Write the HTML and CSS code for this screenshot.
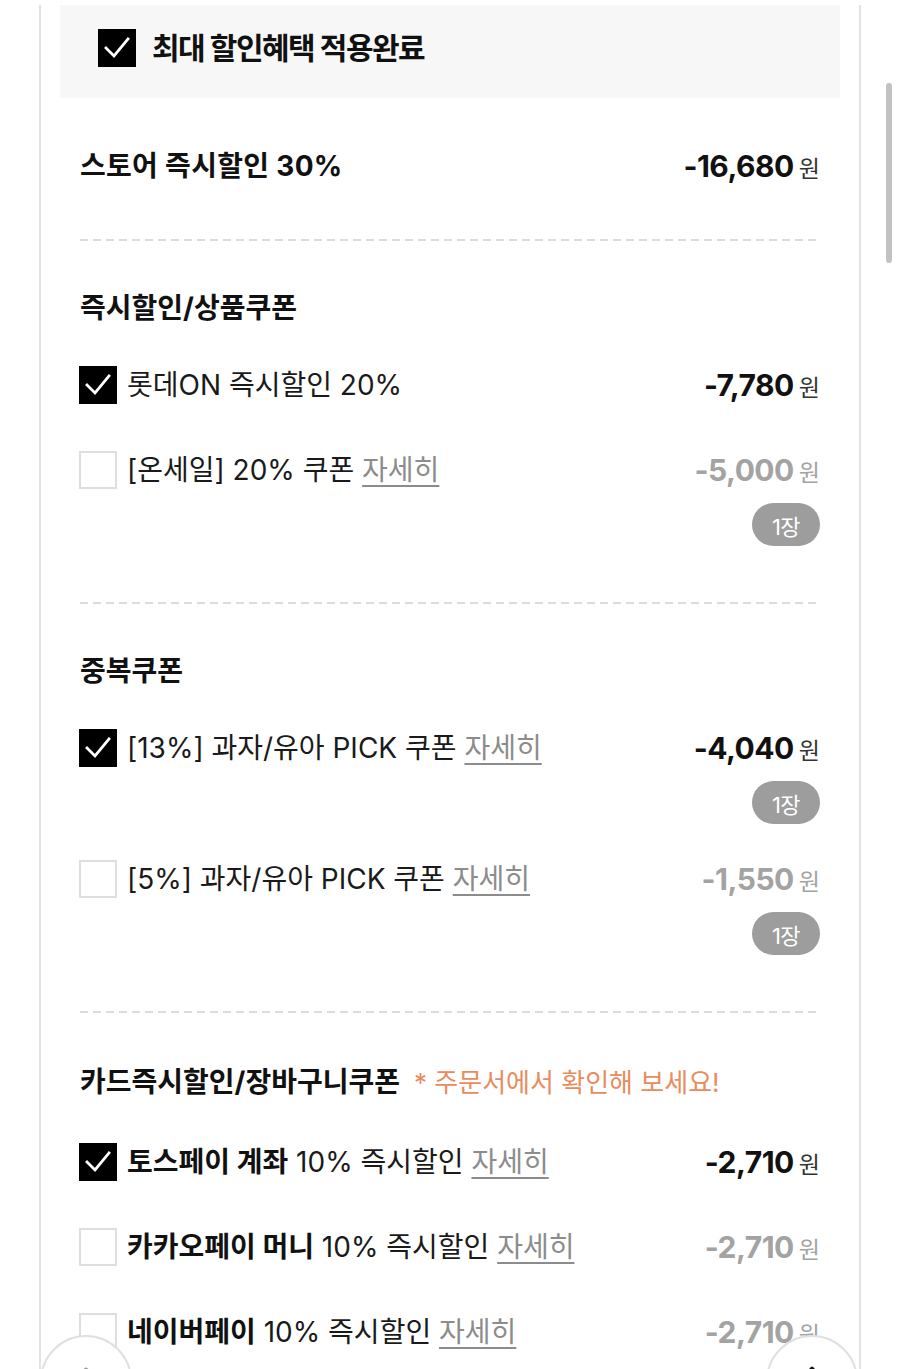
FILE: index.html
```html
<!DOCTYPE html>
<html lang="ko">
<head>
<meta charset="utf-8">
<title>할인혜택</title>
<link rel="stylesheet" href="styles.css">
</head>
<body>
<div class="page">
  <div class="sheet">
    <div class="banner">
      <span class="check is-on"><svg viewBox="0 0 38 38"><path d="M8 19 L16 27 L30 10"/></svg></span>
      <span class="banner-title">최대 할인혜택 적용완료</span>
    </div>

    <div class="section section--store">
      <div class="row">
        <span class="row-title">스토어 즉시할인 30%</span>
        <span class="price"><b>-16,680</b><span class="won">원</span></span>
      </div>
    </div>

    <div class="divider"></div>

    <section class="section">
      <h3 class="heading">즉시할인/상품쿠폰</h3>
      <ul class="items">
        <li class="item">
          <div class="opt"><span class="check is-on"><svg viewBox="0 0 38 38"><path d="M8 19 L16 27 L30 10"/></svg></span><span class="label">롯데ON 즉시할인 20%</span></div>
          <div class="amount"><span class="price"><b>-7,780</b><span class="won">원</span></span></div>
        </li>
        <li class="item">
          <div class="opt"><span class="check"></span><span class="label">[온세일] 20% 쿠폰 <a class="more">자세히</a></span></div>
          <div class="amount"><span class="price is-off"><b>-5,000</b><span class="won">원</span></span><span class="count">1장</span></div>
        </li>
      </ul>
    </section>

    <div class="divider"></div>

    <section class="section">
      <h3 class="heading">중복쿠폰</h3>
      <ul class="items">
        <li class="item">
          <div class="opt"><span class="check is-on"><svg viewBox="0 0 38 38"><path d="M8 19 L16 27 L30 10"/></svg></span><span class="label">[13%] 과자/유아 PICK 쿠폰 <a class="more">자세히</a></span></div>
          <div class="amount"><span class="price"><b>-4,040</b><span class="won">원</span></span><span class="count">1장</span></div>
        </li>
        <li class="item">
          <div class="opt"><span class="check"></span><span class="label">[5%] 과자/유아 PICK 쿠폰 <a class="more">자세히</a></span></div>
          <div class="amount"><span class="price is-off"><b>-1,550</b><span class="won">원</span></span><span class="count">1장</span></div>
        </li>
      </ul>
    </section>

    <div class="divider"></div>

    <section class="section">
      <h3 class="heading heading--note">카드즉시할인/장바구니쿠폰<span class="note">* 주문서에서 확인해 보세요!</span></h3>
      <ul class="items">
        <li class="item">
          <div class="opt"><span class="check is-on"><svg viewBox="0 0 38 38"><path d="M8 19 L16 27 L30 10"/></svg></span><span class="label"><strong>토스페이 계좌</strong> 10% 즉시할인 <a class="more">자세히</a></span></div>
          <div class="amount"><span class="price"><b>-2,710</b><span class="won">원</span></span></div>
        </li>
        <li class="item">
          <div class="opt"><span class="check"></span><span class="label"><strong>카카오페이 머니</strong> 10% 즉시할인 <a class="more">자세히</a></span></div>
          <div class="amount"><span class="price is-off"><b>-2,710</b><span class="won">원</span></span></div>
        </li>
        <li class="item">
          <div class="opt"><span class="check"></span><span class="label"><strong>네이버페이</strong> 10% 즉시할인 <a class="more">자세히</a></span></div>
          <div class="amount"><span class="price is-off"><b>-2,710</b><span class="won">원</span></span></div>
        </li>
      </ul>
    </section>
  </div>

  <div class="scroll-thumb"></div>

  <button class="fab fab--home" type="button" aria-label="홈">
    <svg viewBox="0 0 40 40"><path d="M6 20 L20 8 L34 20 M10 17 V33 H30 V17"/></svg>
  </button>
  <button class="fab fab--top" type="button" aria-label="맨 위로">
    <svg viewBox="0 0 40 40"><path d="M20 34 V8 M10 18 L20 7 L30 18"/></svg>
  </button>
</div>
</body>
</html>
```

FILE: styles.css
```css
* { box-sizing: border-box; }

body {
  margin: 0;
  background: #fff;
  color: #111;
  font-family: Inter, "Noto Sans CJK KR", sans-serif;
}

.page {
  position: relative;
  height: 1369px;
  overflow: hidden;
}

/* bottom sheet with thin side rules */
.sheet {
  width: 822px;
  min-height: 1400px;
  margin: 5px 0 0 39px;
  padding: 0 19px;
  border-left: 2px solid #e3e3e3;
  border-right: 2px solid #e3e3e3;
}

.banner {
  display: flex;
  align-items: center;
  gap: 16px;
  height: 93px;
  padding: 0 38px 7px;
  background: #f7f7f7;
}

.banner-title {
  font-size: 30px;
  font-weight: 700;
  letter-spacing: -1.5px;
  line-height: 38px;
}

/* checkboxes */
.check {
  flex: none;
  display: block;
  width: 38px;
  height: 38px;
  border: 2px solid #dedede;
  background: #fff;
}

.check.is-on {
  border: 0;
  background: #000;
}

.check svg {
  display: block;
  width: 38px;
  height: 38px;
}

.check path {
  fill: none;
  stroke: #fff;
  stroke-width: 2.8;
  stroke-linecap: square;
}

/* sections */
.section {
  padding: 47px 20px 56px;
}

.section--store {
  padding: 48px 20px 53px;
}

.row {
  display: flex;
  justify-content: space-between;
  align-items: center;
  height: 40px;
}

.row-title,
.heading {
  margin: 0;
  font-size: 28px;
  font-weight: 700;
  letter-spacing: 0;
  line-height: 40px;
}

.row-title {
  letter-spacing: 0.3px;
}

.heading--note {
  line-height: 44px;
}

.note {
  margin-left: 14px;
  font-size: 26px;
  font-weight: 400;
  letter-spacing: 0;
  color: #e98b5c;
}

.divider {
  height: 2px;
  margin: 0 20px;
  background: repeating-linear-gradient(90deg, #dcdcdc 0 8px, transparent 8px 13px);
}

.items {
  display: flex;
  flex-direction: column;
  gap: 35px;
  margin: 37px 0 0;
  padding: 0;
  list-style: none;
}

.item {
  display: flex;
  justify-content: space-between;
  align-items: flex-start;
  min-height: 50px;
}

.opt {
  display: flex;
  align-items: center;
  gap: 10px;
  height: 40px;
  margin-left: -1px;
}

.label {
  font-size: 28px;
  letter-spacing: 0;
  line-height: 40px;
  color: #1a1a1a;
  white-space: nowrap;
}

.label strong {
  font-weight: 700;
  color: #111;
}

.more {
  color: #8c8c8c;
  text-decoration: underline;
  text-decoration-thickness: 1.5px;
  text-underline-offset: 5px;
}

/* amounts */
.amount {
  display: flex;
  flex-direction: column;
  align-items: flex-end;
}

.price {
  display: flex;
  align-items: baseline;
  gap: 5px;
  height: 40px;
  line-height: 40px;
  white-space: nowrap;
  color: #111;
}

.price b {
  font-size: 30px;
  font-weight: 700;
  letter-spacing: -0.5px;
}

.won {
  font-size: 23px;
  color: #333;
}

.price.is-off,
.price.is-off .won {
  color: #a3a3a3;
}

.count {
  display: flex;
  align-items: center;
  justify-content: center;
  width: 68px;
  height: 43px;
  margin-top: 13px;
  border-radius: 22px;
  background: #9d9d9d;
  color: #fff;
  font-size: 22px;
  letter-spacing: -0.5px;
}

/* overlays */
.scroll-thumb {
  position: absolute;
  left: 886px;
  top: 83px;
  width: 6px;
  height: 180px;
  border-radius: 3px;
  background: #c2c2c2;
}

.fab {
  position: absolute;
  top: 1335px;
  width: 92px;
  height: 92px;
  padding: 0;
  border: 2px solid #e0e0e0;
  border-radius: 50%;
  background: #fff;
  display: flex;
  align-items: center;
  justify-content: center;
}

.fab svg {
  width: 40px;
  height: 40px;
  fill: none;
  stroke-width: 3;
  stroke-linejoin: round;
}

.fab--home {
  left: 40px;
}

.fab--home svg {
  stroke: #9a9a9a;
}

.fab--top {
  left: 766px;
}

.fab--top svg {
  stroke: #111;
}
```
